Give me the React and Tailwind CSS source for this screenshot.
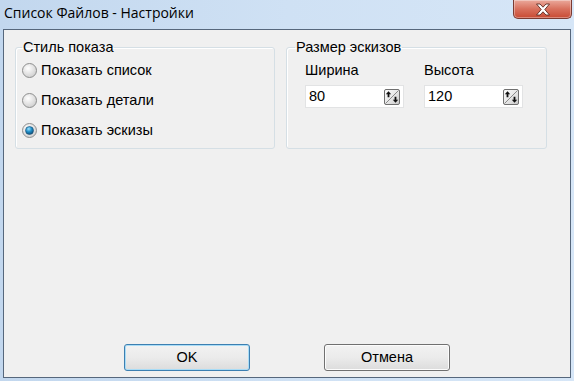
import React from 'react';

const SpinIcon = () => (
  <svg width="16" height="16" viewBox="0 0 16 16" className="shrink-0">
    <defs>
      <linearGradient id="sg" x1="0" y1="0" x2="1" y2="1">
        <stop offset="0" stopColor="#fbfbfb" />
        <stop offset="0.5" stopColor="#e8e8e8" />
        <stop offset="1" stopColor="#c9c9c9" />
      </linearGradient>
    </defs>
    <rect x="0.5" y="0.5" width="15" height="15" rx="1.5" fill="url(#sg)" stroke="#707070" />
    <line x1="1.5" y1="14.5" x2="14.5" y2="1.5" stroke="#8a8a8a" />
    {/* up arrow */}
    <path d="M4.5 2.3 L7.2 5.3 H5.4 V8.2 H3.6 V5.3 H1.8 Z" fill="#111" />
    {/* down arrow */}
    <path d="M11.5 13.7 L14.2 10.7 H12.4 V7.8 H10.6 V10.7 H8.8 Z" fill="#111" />
  </svg>
);

const Radio = ({ checked }) => (
  <svg width="15" height="15" viewBox="0 0 15 15" className="shrink-0">
    <defs>
      <radialGradient id={checked ? 'rc' : 'ru'} cx="0.4" cy="0.35" r="0.7">
        <stop offset="0" stopColor="#ffffff" />
        <stop offset="1" stopColor="#cdcdcd" />
      </radialGradient>
      <radialGradient id="dot" cx="0.4" cy="0.3" r="0.8">
        <stop offset="0" stopColor="#9ee2ff" />
        <stop offset="0.45" stopColor="#1f8fc8" />
        <stop offset="1" stopColor="#0b3f66" />
      </radialGradient>
    </defs>
    <circle cx="7.5" cy="7.5" r="7" fill={checked ? 'url(#rc)' : 'url(#ru)'} stroke="#8e8f8f" />
    {checked && <circle cx="7.5" cy="7.5" r="4" fill="url(#dot)" stroke="#1d4f73" strokeWidth="0.6" />}
  </svg>
);

const Spinner = ({ value }) => (
  <div className="w-[99px] h-[23px] bg-white border border-[#e2e3e4] flex items-center pl-[3px] pr-[3px]">
    <span className="flex-1 text-[14.5px] leading-none text-black">{value}</span>
    <SpinIcon />
  </div>
);

const App = () => {
  const radios = [
    { label: 'Показать список', checked: false },
    { label: 'Показать детали', checked: false },
    { label: 'Показать эскизы', checked: true },
  ];

  return (
    <div
      className="w-[574px] h-[381px] flex flex-col bg-gradient-to-r from-[#c2d7ee] via-[#cfe1f4] to-[#d6e6f7] overflow-hidden"
      style={{ fontFamily: '"Liberation Sans", Arial, sans-serif' }}
    >
      {/* Title bar */}
      <div className="h-[29px] flex items-start shrink-0">
        <div
          className="pl-[4px] pt-[3px] text-[14px] leading-[20px] text-black"
          style={{ fontFamily: '"Open Sans", "Noto Sans", sans-serif' }}
        >
          Список Файлов - Настройки
        </div>
        <div className="ml-auto mr-[2px] w-[59px] h-[19px] rounded-b-[5px] border border-t-0 border-[#7b3b32] bg-gradient-to-b from-[#eaa99c] via-[#d8705d] to-[#c84a33] flex items-center justify-center shadow-[inset_0_0_0_1px_rgba(255,255,255,0.35)]">
          <svg width="16" height="13" viewBox="0 0 16 13">
            <path
              d="M1.5 1 H5 L8 4.2 L11 1 H14.5 L9.8 6.5 L14.5 12 H11 L8 8.8 L5 12 H1.5 L6.2 6.5 Z"
              fill="#ffffff"
              stroke="#5c2a22"
              strokeWidth="0.9"
              strokeLinejoin="round"
            />
          </svg>
        </div>
      </div>

      {/* Client area */}
      <div className="flex-1 mx-[3px] mb-[3px] border border-[#56677c] bg-[#f0f0f0] flex flex-col px-[11px] pt-[9px] pb-[6px]">
        <div className="flex gap-[11px]">
          <fieldset className="w-[260px] border border-[#d5dfe5] rounded-[3px] pl-[6px] pb-[3px] shadow-[inset_1px_1px_0_#ffffff]">
            <legend className="px-[1px] text-[14.5px] leading-[16px] text-black">Стиль показа</legend>
            <div className="flex flex-col">
              {radios.map((r) => (
                <div key={r.label} className="h-[30px] flex items-center gap-[4px] pt-[1px]">
                  <Radio checked={r.checked} />
                  <span className="text-[14.5px] leading-none text-black">{r.label}</span>
                </div>
              ))}
            </div>
          </fieldset>

          <fieldset className="w-[261px] border border-[#d5dfe5] rounded-[3px] pl-[8px] shadow-[inset_1px_1px_0_#ffffff]">
            <legend className="px-[1px] text-[14.5px] leading-[16px] text-black">Размер эскизов</legend>
            <div className="flex gap-[20px] pl-[10px] pt-[7px]">
              <div className="flex flex-col gap-[6px]">
                <span className="text-[14.5px] leading-[17px] text-black">Ширина</span>
                <Spinner value="80" />
              </div>
              <div className="flex flex-col gap-[6px]">
                <span className="text-[14.5px] leading-[17px] text-black">Высота</span>
                <Spinner value="120" />
              </div>
            </div>
          </fieldset>
        </div>

        {/* Buttons */}
        <div className="mt-auto flex justify-center gap-[74px]">
          <button className="w-[126px] h-[27px] rounded-[3px] border border-[#3c7fb1] bg-gradient-to-b from-[#f2f2f2] via-[#ebebeb] to-[#dcdcdc] shadow-[inset_0_0_0_1px_#a9dcf6] text-[14.5px] text-black">
            OK
          </button>
          <button className="w-[126px] h-[27px] rounded-[3px] border border-[#707070] bg-gradient-to-b from-[#f2f2f2] via-[#ebebeb] to-[#dcdcdc] shadow-[inset_0_0_0_1px_#fcfcfc] text-[14.5px] text-black">
            Отмена
          </button>
        </div>
      </div>
    </div>
  );
};

export default App;
